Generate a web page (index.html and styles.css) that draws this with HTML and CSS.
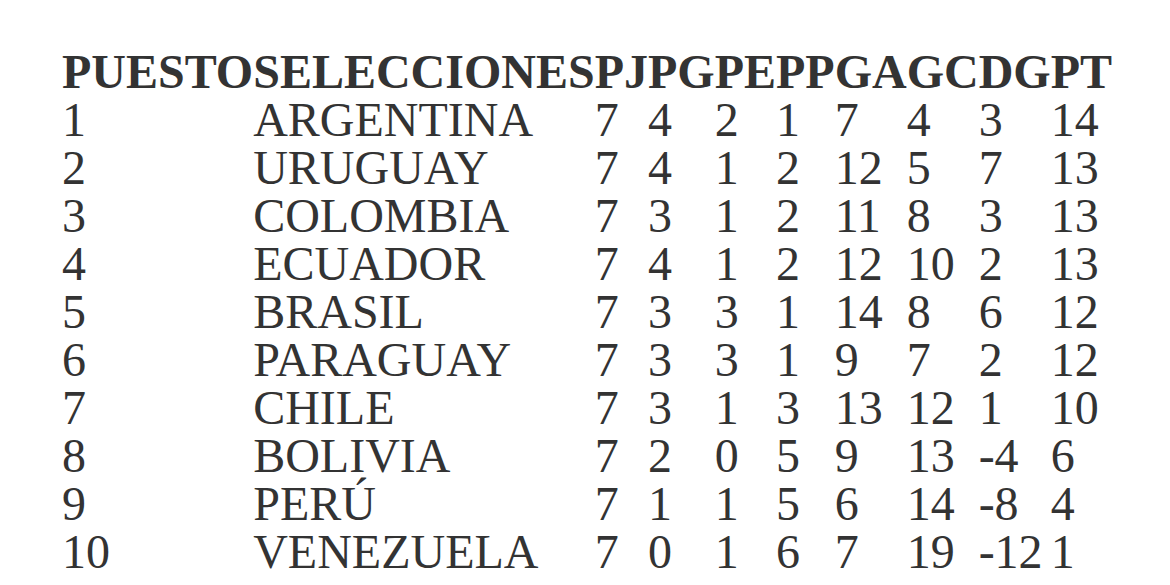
FILE: index.html
```html
<!DOCTYPE html>
<html lang="es">
<head>
<meta charset="utf-8">
<title>Tabla de posiciones</title>
<link rel="stylesheet" href="styles.css">
</head>
<body>
<div class="page">
<table class="standings">
  <thead>
    <tr><th>PUESTO</th><th>SELECCIONES</th><th>PJ</th><th>PG</th><th>PE</th><th>PP</th><th>GA</th><th>GC</th><th>DG</th><th>PT</th></tr>
  </thead>
  <tbody>
    <tr><td>1</td><td>ARGENTINA</td><td>7</td><td>4</td><td>2</td><td>1</td><td>7</td><td>4</td><td>3</td><td>14</td></tr>
    <tr><td>2</td><td>URUGUAY</td><td>7</td><td>4</td><td>1</td><td>2</td><td>12</td><td>5</td><td>7</td><td>13</td></tr>
    <tr><td>3</td><td>COLOMBIA</td><td>7</td><td>3</td><td>1</td><td>2</td><td>11</td><td>8</td><td>3</td><td>13</td></tr>
    <tr><td>4</td><td>ECUADOR</td><td>7</td><td>4</td><td>1</td><td>2</td><td>12</td><td>10</td><td>2</td><td>13</td></tr>
    <tr><td>5</td><td>BRASIL</td><td>7</td><td>3</td><td>3</td><td>1</td><td>14</td><td>8</td><td>6</td><td>12</td></tr>
    <tr><td>6</td><td>PARAGUAY</td><td>7</td><td>3</td><td>3</td><td>1</td><td>9</td><td>7</td><td>2</td><td>12</td></tr>
    <tr><td>7</td><td>CHILE</td><td>7</td><td>3</td><td>1</td><td>3</td><td>13</td><td>12</td><td>1</td><td>10</td></tr>
    <tr><td>8</td><td>BOLIVIA</td><td>7</td><td>2</td><td>0</td><td>5</td><td>9</td><td>13</td><td>-4</td><td>6</td></tr>
    <tr><td>9</td><td>PERÚ</td><td>7</td><td>1</td><td>1</td><td>5</td><td>6</td><td>14</td><td>-8</td><td>4</td></tr>
    <tr><td>10</td><td>VENEZUELA</td><td>7</td><td>0</td><td>1</td><td>6</td><td>7</td><td>19</td><td>-12</td><td>1</td></tr>
  </tbody>
</table>
</div>
</body>
</html>
```

FILE: styles.css
```css
html, body {
  margin: 0;
  padding: 0;
  background: #ffffff;
}

.page {
  padding: 48px 0 0 62px;
}

.standings {
  border-collapse: collapse;
  border-spacing: 0;
  font-family: "Liberation Serif", "Times New Roman", serif;
  font-size: 48px;
  line-height: 48px;
  color: #333333;
}

.standings th,
.standings td {
  padding: 0;
  text-align: left;
  vertical-align: baseline;
  white-space: nowrap;
}

.standings th {
  font-weight: bold;
}

.standings td {
  font-weight: normal;
}
```
